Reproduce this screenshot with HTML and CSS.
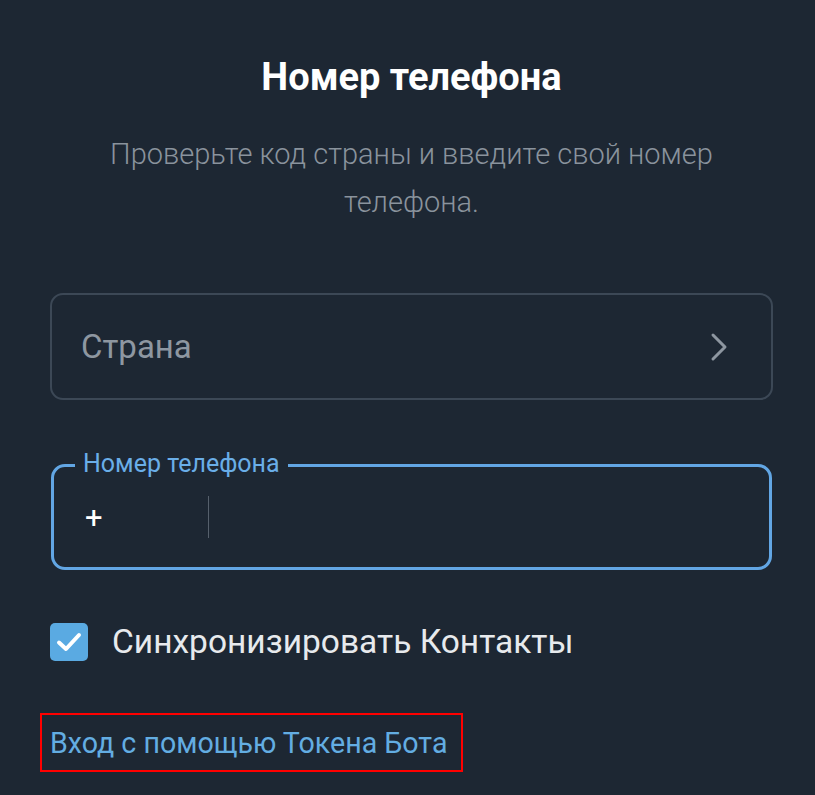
FILE: index.html
```html
<!DOCTYPE html>
<html lang="ru">
<head>
<meta charset="utf-8">
<link rel="stylesheet" href="styles.css">
</head>
<body>
<div class="page">
  <h1 class="title">Номер телефона</h1>
  <p class="subtitle">Проверьте код страны и введите свой номер телефона.</p>

  <div class="country">
    <span class="country-text">Страна</span>
    <svg class="chevron" width="20" height="30" viewBox="0 0 20 30"><path d="M4 3 L16 15 L4 27" fill="none" stroke="#8d96a0" stroke-width="3" stroke-linecap="round" stroke-linejoin="round"/></svg>
  </div>

  <div class="phone">
    <span class="phone-label">Номер телефона</span>
    <span class="plus">+</span>
    <span class="divider"></span>
  </div>

  <div class="sync">
    <span class="checkbox">
      <svg width="38" height="38" viewBox="0 0 38 38"><path d="M9 19.5 L16 26 L29 12" fill="none" stroke="#ffffff" stroke-width="4" stroke-linecap="round" stroke-linejoin="round"/></svg>
    </span>
    <span class="sync-text">Синхронизировать Контакты</span>
  </div>

  <div class="token">
    <span class="token-text">Вход с помощью Токена Бота</span>
  </div>
</div>
</body>
</html>
```

FILE: styles.css
```css
html, body {
  margin: 0;
  padding: 0;
  background: #1d2733;
  font-family: Roboto, "Noto Sans", sans-serif;
}
.page {
  width: 815px;
  height: 795px;
  box-sizing: border-box;
  padding: 56px 42px 0 50px;
  display: flex;
  flex-direction: column;
  overflow: hidden;
}
.title {
  margin: 0;
  text-align: center;
  font-size: 38px;
  font-weight: 700;
  color: #ffffff;
  line-height: 42px;
  width: 723px;
}
.subtitle {
  margin: 32px auto 0;
  width: 680px;
  text-align: center;
  font-size: 29px;
  font-weight: 300;
  line-height: 48px;
  color: #8a939d;
}
.country {
  margin-top: 67px;
  width: 723px;
  height: 107px;
  box-sizing: border-box;
  border: 2px solid #3c4856;
  border-radius: 13px;
  display: flex;
  align-items: center;
  padding: 0 42px 0 29px;
  justify-content: space-between;
}
.country-text {
  font-size: 33px;
  color: #8e97a1;
  font-weight: 400;
}
.chevron {
  display: block;
}
.phone {
  position: relative;
  margin-top: 64px;
  margin-left: 1px;
  width: 721px;
  height: 106px;
  box-sizing: border-box;
  border: 3px solid #62a6e4;
  border-radius: 14px;
  display: flex;
  align-items: center;
  padding-left: 31px;
}
.phone-label {
  position: absolute;
  top: -20px;
  left: 21px;
  padding: 0 8px;
  background: #1d2733;
  font-size: 25px;
  line-height: 34px;
  color: #6aaee8;
}
.plus {
  font-size: 31px;
  color: #ffffff;
  width: 123px;
}
.divider {
  width: 1px;
  height: 42px;
  background: #56606c;
}
.sync {
  margin-top: 52px;
  display: flex;
  align-items: center;
}
.checkbox {
  width: 38px;
  height: 38px;
  border-radius: 5px;
  background: #5aaae2;
  display: flex;
}
.sync-text {
  margin-left: 24px;
  font-size: 33.5px;
  color: #e7eaed;
  font-weight: 400;
}
.token {
  margin-top: 52px;
  margin-left: -10px;
  width: 423px;
  height: 59px;
  box-sizing: border-box;
  border: 2px solid #ff0000;
  display: flex;
  align-items: center;
  padding-left: 8px;
}
.token-text {
  font-size: 28.6px;
  color: #63ade2;
  font-weight: 400;
}
```
